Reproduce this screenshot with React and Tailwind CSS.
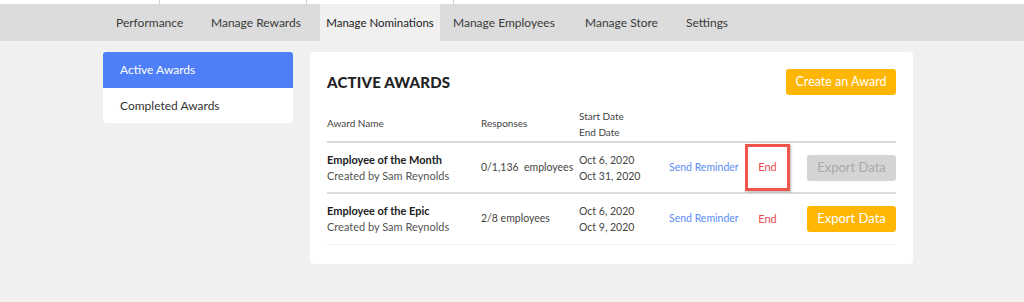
import React from 'react';

const tabs = [
  { label: 'Performance', w: 'w-[95px]' },
  { label: 'Manage Rewards', w: 'w-[122px]' },
  { label: 'Manage Nominations', w: 'w-[120px]', active: true },
  { label: 'Manage Employees', w: 'w-[132px]' },
  { label: 'Manage Store', w: 'w-[101px]' },
  { label: 'Settings', w: 'w-[80px]' },
];

const awards = [
  {
    name: 'Employee of the Month',
    creator: 'Created by Sam Reynolds',
    responses: '0/1,136  employees',
    start: 'Oct 6, 2020',
    end: 'Oct 31, 2020',
    highlight: true,
    exportable: false,
  },
  {
    name: 'Employee of the Epic',
    creator: 'Created by Sam Reynolds',
    responses: '2/8 employees',
    start: 'Oct 6, 2020',
    end: 'Oct 9, 2020',
    highlight: false,
    exportable: true,
  },
];

export default function App() {
  return (
    <div className="h-[302px] bg-[#f0f0f0] text-[#333] overflow-hidden" style={{ fontFamily: 'Lato, "Noto Sans", sans-serif' }}>
      {/* top strip */}
      <div className="flex h-[4px] bg-white shadow-[0_1px_1px_rgba(0,0,0,0.08)]">
        <div className="w-[160px] border-r border-[#d0d0d0]" />
        <div className="w-[147px] border-r border-[#d0d0d0]" />
        <div className="w-[147px] border-r border-[#d0d0d0]" />
        <div className="flex-1" />
      </div>

      {/* tabs */}
      <div className="flex h-[37px] bg-[#dcdcdc] pl-[103px] text-[12px] text-[#3a3a3a]">
        {tabs.map((t) => (
          <div
            key={t.label}
            className={
              t.active
                ? `${t.w} flex items-center justify-center bg-[#f0f0f0] text-[#222] text-[11.5px]`
                : `${t.w} flex items-center pl-[13px]`
            }
          >
            {t.label}
          </div>
        ))}
      </div>

      {/* body */}
      <div className="flex items-start gap-[17px] pl-[103px] pt-[11px]">
        <div className="w-[190px] bg-white rounded-[3px] overflow-hidden text-[12px]">
          <div className="h-[36px] flex items-center pl-[17px] bg-[#4f7ff8] text-white">Active Awards</div>
          <div className="h-[35px] flex items-center pl-[17px] text-[#333]">Completed Awards</div>
        </div>

        <div className="w-[603px] bg-white rounded-[4px] px-[17px] pt-[17px] pb-[19px]">
          <div className="flex items-center justify-between">
            <h1 className="text-[15px] font-black tracking-[0.2px] text-[#222]">ACTIVE AWARDS</h1>
            <button className="h-[26px] w-[110px] rounded-[3px] bg-[#ffb605] text-white text-[12.5px]">Create an Award</button>
          </div>

          {/* header */}
          <div className="flex items-center h-[37px] mt-[11px] border-b-2 border-[#d9d9d9] text-[10px] text-[#444]">
            <div className="w-[154px]">Award Name</div>
            <div className="w-[98px]">Responses</div>
            <div className="w-[90px] leading-[16px]">
              <div>Start Date</div>
              <div>End Date</div>
            </div>
          </div>

          {awards.map((a, i) => (
            <div
              key={a.name}
              className={`flex items-center h-[51px] text-[11px] ${i === awards.length - 1 ? 'border-b border-[#f2f2f2]' : 'border-b-2 border-[#dcdcdc]'}`}
            >
              <div className="w-[154px] leading-[16px]">
                <div className="font-bold text-[#222]">{a.name}</div>
                <div className="text-[#555]">{a.creator}</div>
              </div>
              <div className="w-[98px] text-[10.5px] text-[#444] whitespace-pre">{a.responses}</div>
              <div className="w-[90px] leading-[16px] text-[10.5px] text-[#444]">
                <div>{a.start}</div>
                <div>{a.end}</div>
              </div>
              <div className="w-[76px] text-[10.5px] text-[#5b8cf6]">Send Reminder</div>
              <div
                className={`w-[45px] h-[47px] flex items-center justify-center text-[11px] text-[#ea4a4f] ${a.highlight ? 'border-[3px] border-[#f2554b] shadow-[1px_1px_2px_rgba(0,0,0,0.3)]' : ''}`}
              >
                End
              </div>
              <div className="flex-1 flex justify-end">
                <button
                  className={`h-[26px] w-[89px] rounded-[3px] text-[13px] ${a.exportable ? 'bg-[#ffb605] text-white' : 'bg-[#d4d4d4] text-[#a9a9a9]'}`}
                >
                  Export Data
                </button>
              </div>
            </div>
          ))}
        </div>
      </div>
    </div>
  );
}
